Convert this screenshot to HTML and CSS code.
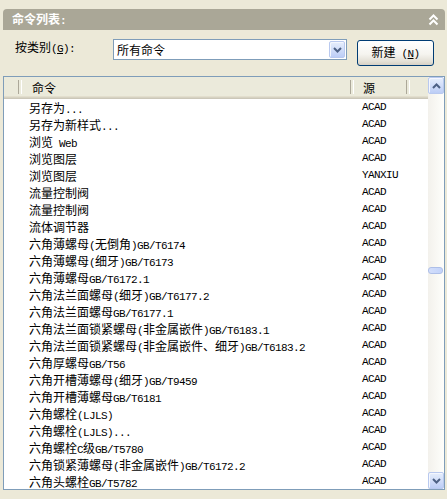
FILE: index.html
```html
<!DOCTYPE html>
<html lang="zh-CN">
<head>
<meta charset="utf-8">
<title>命令列表</title>
<link rel="stylesheet" href="styles.css">
</head>
<body>
<div class="panel">
  <div class="titlebar">
    <span class="title">命令列表<span class="en">:</span></span>
    <svg class="collapse" width="11" height="12" viewBox="0 0 11 12">
      <polyline points="1.5,5.5 5.5,1.5 9.5,5.5" fill="none" stroke="#fff" stroke-width="2"/>
      <polyline points="1.5,10.5 5.5,6.5 9.5,10.5" fill="none" stroke="#fff" stroke-width="2"/>
    </svg>
  </div>

  <div class="filter">
    <label class="lbl">按类别<span class="en">(<u>G</u>):</span></label>
    <div class="combo">
      <span class="combo-text">所有命令</span>
      <span class="xpbtn drop">
        <svg width="9" height="6" viewBox="0 0 9 6"><polyline points="1,1 4.5,4.5 8,1" fill="none" stroke="#4d6185" stroke-width="2"/></svg>
      </span>
    </div>
    <button class="btn">新建<span class="en"> (<u>N</u>)</span></button>
  </div>

  <div class="list">
    <div class="main">
      <div class="head">
        <div class="hc"></div>
        <div class="hc hname">命令</div>
        <div class="hc hsrc">源</div>
        <div class="hc"></div>
      </div>
      <div class="rows">
        <div class="row"><span></span><span class="name">另存为<span class="en">...</span></span><span class="src">ACAD</span></div>
        <div class="row"><span></span><span class="name">另存为新样式<span class="en">...</span></span><span class="src">ACAD</span></div>
        <div class="row"><span></span><span class="name">浏览<span class="en"> Web</span></span><span class="src">ACAD</span></div>
        <div class="row"><span></span><span class="name">浏览图层</span><span class="src">ACAD</span></div>
        <div class="row"><span></span><span class="name">浏览图层</span><span class="src">YANXIU</span></div>
        <div class="row"><span></span><span class="name">流量控制阀</span><span class="src">ACAD</span></div>
        <div class="row"><span></span><span class="name">流量控制阀</span><span class="src">ACAD</span></div>
        <div class="row"><span></span><span class="name">流体调节器</span><span class="src">ACAD</span></div>
        <div class="row"><span></span><span class="name">六角薄螺母<span class="en">(</span>无倒角<span class="en">)GB/T6174</span></span><span class="src">ACAD</span></div>
        <div class="row"><span></span><span class="name">六角薄螺母<span class="en">(</span>细牙<span class="en">)GB/T6173</span></span><span class="src">ACAD</span></div>
        <div class="row"><span></span><span class="name">六角薄螺母<span class="en">GB/T6172.1</span></span><span class="src">ACAD</span></div>
        <div class="row"><span></span><span class="name">六角法兰面螺母<span class="en">(</span>细牙<span class="en">)GB/T6177.2</span></span><span class="src">ACAD</span></div>
        <div class="row"><span></span><span class="name">六角法兰面螺母<span class="en">GB/T6177.1</span></span><span class="src">ACAD</span></div>
        <div class="row"><span></span><span class="name">六角法兰面锁紧螺母<span class="en">(</span>非金属嵌件<span class="en">)GB/T6183.1</span></span><span class="src">ACAD</span></div>
        <div class="row"><span></span><span class="name">六角法兰面锁紧螺母<span class="en">(</span>非金属嵌件、细牙<span class="en">)GB/T6183.2</span></span><span class="src">ACAD</span></div>
        <div class="row"><span></span><span class="name">六角厚螺母<span class="en">GB/T56</span></span><span class="src">ACAD</span></div>
        <div class="row"><span></span><span class="name">六角开槽薄螺母<span class="en">(</span>细牙<span class="en">)GB/T9459</span></span><span class="src">ACAD</span></div>
        <div class="row"><span></span><span class="name">六角开槽薄螺母<span class="en">GB/T6181</span></span><span class="src">ACAD</span></div>
        <div class="row"><span></span><span class="name">六角螺栓<span class="en">(LJLS)</span></span><span class="src">ACAD</span></div>
        <div class="row"><span></span><span class="name">六角螺栓<span class="en">(LJLS)...</span></span><span class="src">ACAD</span></div>
        <div class="row"><span></span><span class="name">六角螺栓<span class="en">C</span>级<span class="en">GB/T5780</span></span><span class="src">ACAD</span></div>
        <div class="row"><span></span><span class="name">六角锁紧薄螺母<span class="en">(</span>非金属嵌件<span class="en">)GB/T6172.2</span></span><span class="src">ACAD</span></div>
        <div class="row"><span></span><span class="name">六角头螺栓<span class="en">GB/T5782</span></span><span class="src">ACAD</span></div>
      </div>
    </div>
    <div class="vscroll">
      <span class="xpbtn sbtn">
        <svg width="9" height="6" viewBox="0 0 9 6"><polyline points="1,5 4.5,1.5 8,5" fill="none" stroke="#4d6185" stroke-width="2"/></svg>
      </span>
      <div class="track"><div class="thumb"></div></div>
      <span class="xpbtn sbtn">
        <svg width="9" height="6" viewBox="0 0 9 6"><polyline points="1,1 4.5,4.5 8,1" fill="none" stroke="#4d6185" stroke-width="2"/></svg>
      </span>
    </div>
  </div>
</div>
</body>
</html>
```

FILE: styles.css
```css
* { box-sizing: border-box; }

html, body { margin: 0; }

body {
  width: 447px;
  height: 499px;
  overflow: hidden;
  background: #ece9d8;
  color: #000;
  font: 12px/17px "Noto Sans CJK SC", "Noto Sans", sans-serif;
}

/* ASCII runs use a narrow fixed-width face */
.en {
  font-family: "Liberation Mono", monospace;
  font-size: 11px;
  letter-spacing: -0.6px;
  white-space: pre;
}

.panel {
  padding: 9px 2px 0 3px;
}

/* collapsible section header */
.titlebar {
  height: 21px;
  background: #aaa797;
  border-radius: 4px 4px 0 0;
  display: flex;
  align-items: center;
  justify-content: space-between;
  padding: 0 6px 0 9px;
  color: #fff;
  font-weight: bold;
}

.collapse { display: block; }

/* category filter row */
.filter {
  height: 46px;
  display: grid;
  grid-template-columns: 100px 234px 77px;
  column-gap: 10px;
  align-items: start;
}

.lbl {
  padding-left: 12px;
  margin-top: 8px;
}

.combo {
  margin-top: 9px;
  height: 21px;
  border: 1px solid #7f9db9;
  background: #fff;
  display: flex;
  align-items: center;
  justify-content: space-between;
  padding: 0 1px 0 3px;
}

.xpbtn {
  display: flex;
  align-items: center;
  justify-content: center;
  border: 1px solid #b9c9ef;
  border-radius: 2px;
  background: linear-gradient(to bottom, #e6eefc, #d2def9 50%, #bccdf6);
  box-shadow: inset 1px 1px #f4f7fe;
}

.drop {
  width: 16px;
  height: 17px;
}

.btn {
  margin-top: 10px;
  height: 26px;
  padding: 0;
  border: 1px solid #003c74;
  border-radius: 3px;
  background: linear-gradient(to bottom, #ffffff, #f5f4ef 55%, #e3e0d6 85%, #d6d0c5);
  font: inherit;
  color: #000;
}

/* command list view */
.list {
  height: 414px;
  border: 1px solid #7f9db9;
  background: #fff;
  display: flex;
}

.main {
  flex: 1;
  min-width: 0;
  display: flex;
  flex-direction: column;
  overflow: hidden;
}

.head,
.row {
  display: grid;
  grid-template-columns: 18px 332px 56px 18px;
}

.head {
  height: 22px;
  flex: none;
  background: #ebeadb;
  box-shadow: inset 0 -1px #cbc7b8, inset 0 -2px #d6d2c2, inset 0 -3px #e2decd;
}

.hc {
  position: relative;
  line-height: 21px;
}

.hc::after {
  content: "";
  position: absolute;
  right: 0;
  top: 3px;
  bottom: 5px;
  width: 2px;
  border-left: 1px solid #aca899;
  border-right: 1px solid #fff;
}

.hc:last-child::after { display: none; }

.hname { padding-left: 10px; }
.hsrc { padding-left: 9px; }

.rows {
  flex: 1;
  overflow: hidden;
}

.row {
  height: 17px;
  white-space: nowrap;
}

.name { padding-left: 7px; }

.src {
  padding-left: 8px;
  font-family: "Liberation Mono", monospace;
  font-size: 11px;
  letter-spacing: -0.6px;
}

/* vertical scrollbar */
.vscroll {
  width: 16px;
  flex: none;
  display: flex;
  flex-direction: column;
  background: linear-gradient(to right, #f3f1ec, #fefefb);
}

.sbtn {
  width: 16px;
  height: 17px;
  flex: none;
}

.track {
  flex: 1;
}

.thumb {
  margin-top: 173px;
  width: 15px;
  height: 7px;
  border: 1px solid #aebfe8;
  border-radius: 3px;
  background: linear-gradient(to right, #d3defb, #c3d3fa);
}
```
